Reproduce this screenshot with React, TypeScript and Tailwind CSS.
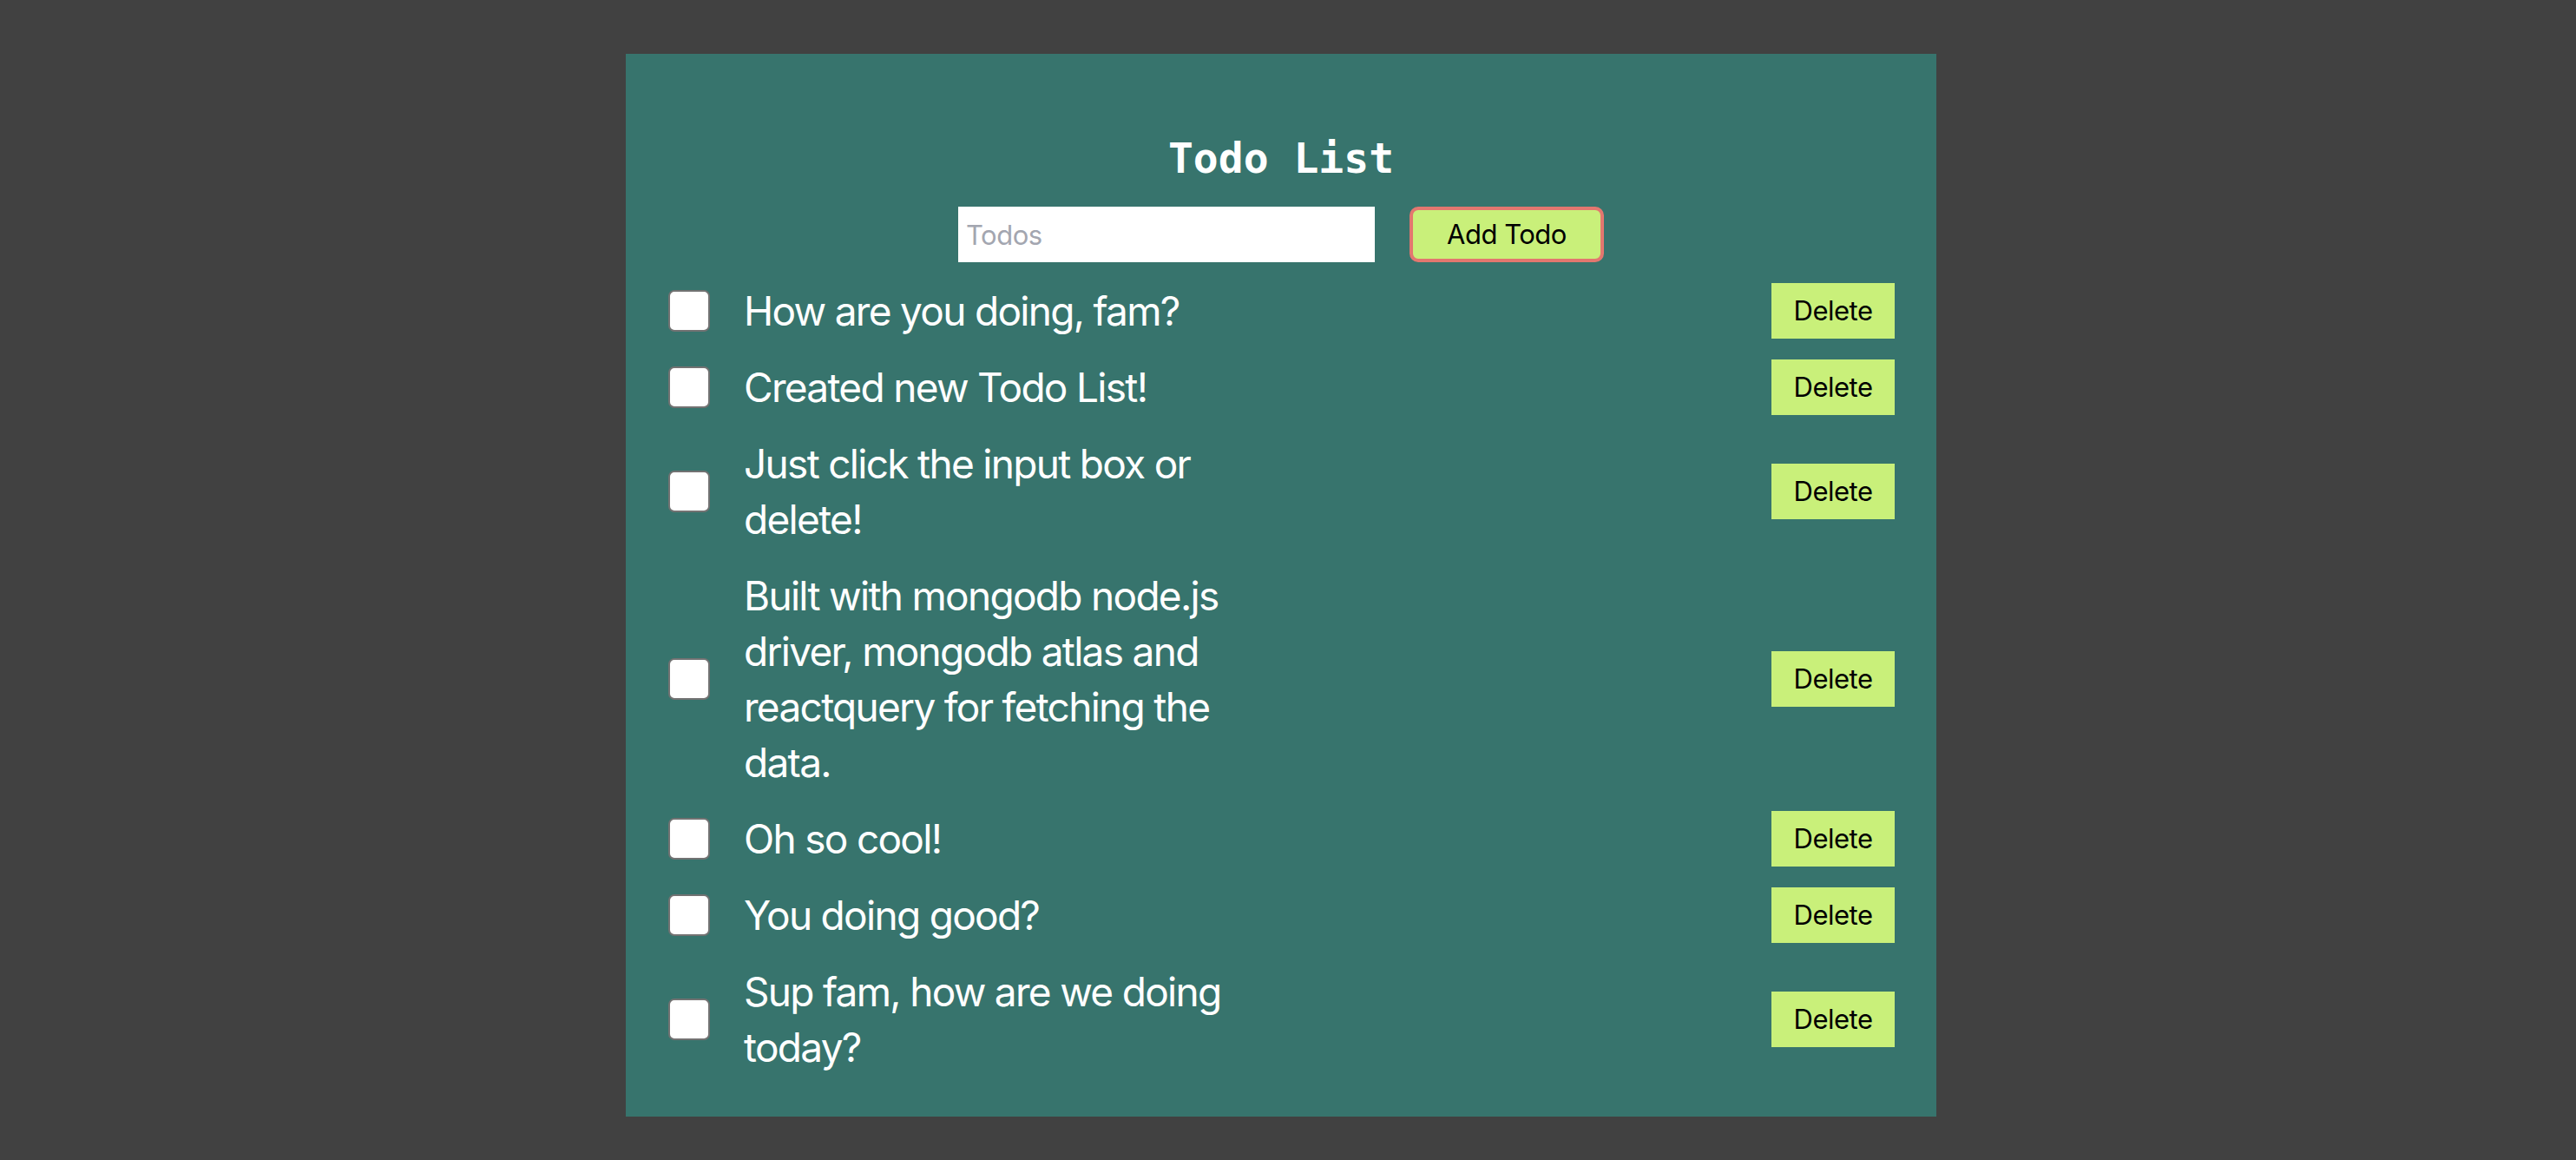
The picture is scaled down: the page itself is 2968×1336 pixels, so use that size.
const todos = [
  "How are you doing, fam?",
  "Created new Todo List!",
  "Just click the input box or delete!",
  "Built with mongodb node.js driver, mongodb atlas and reactquery for fetching the data.",
  "Oh so cool!",
  "You doing good?",
  "Sup fam, how are we doing today?"
];

export default function App() {
  return (
    <div className="min-h-[1336px] w-full bg-[#414141] pr-[16px] pt-[62px] font-['Inter',sans-serif]">
      <main className="mx-auto w-[1510px] bg-[#37746d] px-[48px] pb-[48px] pt-[96px]">
        <h1 className="mb-[32px] text-center font-['DejaVu_Sans_Mono',monospace] text-[48px] font-bold leading-[48px] text-white">
          Todo List
        </h1>
        <form className="mb-[24px] flex items-center justify-center gap-[40px]" onSubmit={(event) => event.preventDefault()}>
          <input
            placeholder="Todos"
            className="h-[64px] w-[480px] bg-white px-[9px] text-[31px] tracking-[-0.5px] text-black outline-none placeholder:text-[#a3a6b0]"
          />
          <button
            type="submit"
            className="h-[64px] w-[224px] rounded-[10px] border-[4px] border-[#e3776f] bg-[#c9f07a] text-[31px] tracking-[-0.5px] text-black"
          >
            Add Todo
          </button>
        </form>
        <ul className="flex flex-col gap-[24px]">
          {todos.map((todo) => (
            <li key={todo} className="flex items-center">
              <span className="ml-[1px] h-[48px] w-[48px] shrink-0 rounded-[7px] border-[2px] border-[#727272] bg-white" />
              <span className="ml-[39px] w-[600px] text-[46px] leading-[64px] tracking-[-1.7px] text-white">{todo}</span>
              <button
                type="button"
                className="ml-auto h-[64px] w-[142px] bg-[#c9f07a] text-[31px] tracking-[-0.5px] text-black"
              >
                Delete
              </button>
            </li>
          ))}
        </ul>
      </main>
    </div>
  );
}
